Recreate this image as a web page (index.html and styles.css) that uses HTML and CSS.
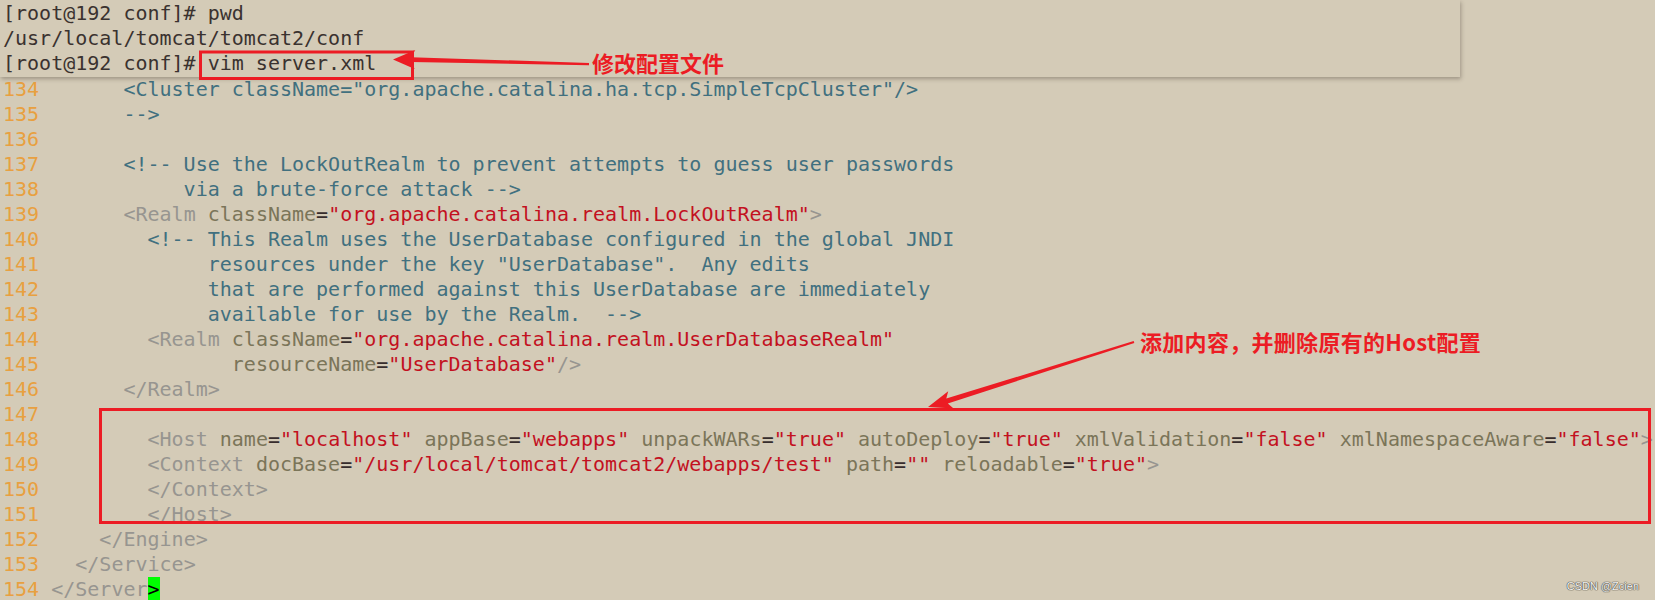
FILE: index.html
```html
<!DOCTYPE html>
<html lang="zh-CN">
<head>
<meta charset="utf-8">
<title>vim server.xml</title>
<link rel="stylesheet" href="styles.css">
</head>
<body>
<div class="screen">
  <div class="term">
    <div class="row">[root@192 conf]# pwd</div>
    <div class="row">/usr/local/tomcat/tomcat2/conf</div>
    <div class="row">[root@192 conf]# vim server.xml</div>
  </div>
  <div class="editor">
    <div class="row"><span class="n">134 </span><span class="c">      &lt;Cluster className="org.apache.catalina.ha.tcp.SimpleTcpCluster"/&gt;</span></div>
    <div class="row"><span class="n">135 </span><span class="c">      --&gt;</span></div>
    <div class="row"><span class="n">136 </span></div>
    <div class="row"><span class="n">137 </span><span class="c">      &lt;!-- Use the LockOutRealm to prevent attempts to guess user passwords</span></div>
    <div class="row"><span class="n">138 </span><span class="c">           via a brute-force attack --&gt;</span></div>
    <div class="row"><span class="n">139 </span>      <span class="t">&lt;Realm</span> <span class="a">className</span><span class="e">=</span><span class="s">"org.apache.catalina.realm.LockOutRealm"</span><span class="t">&gt;</span></div>
    <div class="row"><span class="n">140 </span><span class="c">        &lt;!-- This Realm uses the UserDatabase configured in the global JNDI</span></div>
    <div class="row"><span class="n">141 </span><span class="c">             resources under the key "UserDatabase".  Any edits</span></div>
    <div class="row"><span class="n">142 </span><span class="c">             that are performed against this UserDatabase are immediately</span></div>
    <div class="row"><span class="n">143 </span><span class="c">             available for use by the Realm.  --&gt;</span></div>
    <div class="row"><span class="n">144 </span>        <span class="t">&lt;Realm</span> <span class="a">className</span><span class="e">=</span><span class="s">"org.apache.catalina.realm.UserDatabaseRealm"</span></div>
    <div class="row"><span class="n">145 </span>               <span class="a">resourceName</span><span class="e">=</span><span class="s">"UserDatabase"</span><span class="t">/&gt;</span></div>
    <div class="row"><span class="n">146 </span>      <span class="t">&lt;/Realm&gt;</span></div>
    <div class="row"><span class="n">147 </span></div>
    <div class="row"><span class="n">148 </span>        <span class="t">&lt;Host</span> <span class="a">name</span><span class="e">=</span><span class="s">"localhost"</span> <span class="a">appBase</span><span class="e">=</span><span class="s">"webapps"</span> <span class="a">unpackWARs</span><span class="e">=</span><span class="s">"true"</span> <span class="a">autoDeploy</span><span class="e">=</span><span class="s">"true"</span> <span class="a">xmlValidation</span><span class="e">=</span><span class="s">"false"</span> <span class="a">xmlNamespaceAware</span><span class="e">=</span><span class="s">"false"</span><span class="t">&gt;</span></div>
    <div class="row"><span class="n">149 </span>        <span class="t">&lt;Context</span> <span class="a">docBase</span><span class="e">=</span><span class="s">"/usr/local/tomcat/tomcat2/webapps/test"</span> <span class="a">path</span><span class="e">=</span><span class="s">""</span> <span class="a">reloadable</span><span class="e">=</span><span class="s">"true"</span><span class="t">&gt;</span></div>
    <div class="row"><span class="n">150 </span>        <span class="t">&lt;/Context&gt;</span></div>
    <div class="row"><span class="n">151 </span>        <span class="t">&lt;/Host&gt;</span></div>
    <div class="row"><span class="n">152 </span>    <span class="t">&lt;/Engine&gt;</span></div>
    <div class="row"><span class="n">153 </span>  <span class="t">&lt;/Service&gt;</span></div>
    <div class="row"><span class="n">154 </span><span class="t">&lt;/Server</span><span class="cur">&gt;</span></div>
  </div>

  <svg class="annot" width="1655" height="600" viewBox="0 0 1655 600" aria-hidden="true">
    <rect x="200.5" y="52" width="212" height="26.5" fill="none" stroke="#ec1c24" stroke-width="3"/>
    <rect x="100.5" y="409.5" width="1549" height="113" fill="none" stroke="#ec1c24" stroke-width="3"/>
    <polygon fill="#ec1c24" points="393,59.5 415.3,50 411,57.2 589,63 589,65.2 411,62 414.7,69"/>
    <polygon fill="#ec1c24" points="928,407 953.6,408.4 947.8,403.4 1134.3,343 1133.7,341 946.3,398.6 948.2,391.2"/>
  </svg>
  <div class="note note-top">修改配置文件</div>
  <div class="note note-mid">添加内容，并删除原有的Host配置</div>
  <div class="wm">CSDN @Zcien</div>
</div>
</body>
</html>
```

FILE: styles.css
```css
html, body {
  margin: 0;
  padding: 0;
  background: #d4cbb7;
}

.screen {
  position: relative;
  width: 1655px;
  height: 600px;
  overflow: hidden;
  background: #d4cbb7;
  font-family: "DejaVu Sans Mono", monospace;
  font-size: 20px;
}

.row {
  white-space: pre;
  line-height: 24.9px;
  height: 24.9px;
  padding-left: 3px;
}

.term {
  position: relative;
  z-index: 1;
  width: 1460px;
  padding: 1.3px 0 1.3px 0;
  background: #d4cbb7;
  color: #3a322f;
  box-shadow: 1px 2px 4px rgba(60, 50, 40, 0.35);
}

.editor {
  color: #3a322f;
}

.editor .row {
  line-height: 25px;
  height: 25px;
}

.n { color: #e8a040; }
.c { color: #41707f; }
.t { color: #979590; }
.a { color: #7b7559; }
.e { color: #372d2d; }
.s { color: #c3111f; }
.cur { background: #00ff00; color: #000000; }

.annot {
  position: absolute;
  left: 0;
  top: 0;
  z-index: 2;
}

.note {
  position: absolute;
  z-index: 3;
  font-family: "Noto Sans CJK SC", "Microsoft YaHei", sans-serif;
  font-weight: 700;
  font-size: 22px;
  line-height: 22px;
  color: #ec1c24;
  white-space: nowrap;
}

.note-top {
  left: 592px;
  top: 51px;
}

.note-mid {
  left: 1140px;
  top: 330px;
  letter-spacing: 0.3px;
}

.wm {
  position: absolute;
  z-index: 3;
  right: 16px;
  top: 581px;
  font-family: "Liberation Sans", Arial, sans-serif;
  font-size: 11px;
  line-height: 11px;
  color: #f4f4f4;
  text-shadow: 0 0 1px #4a463f, 0 0 1px #4a463f, 0 0 1px #4a463f;
}
```
